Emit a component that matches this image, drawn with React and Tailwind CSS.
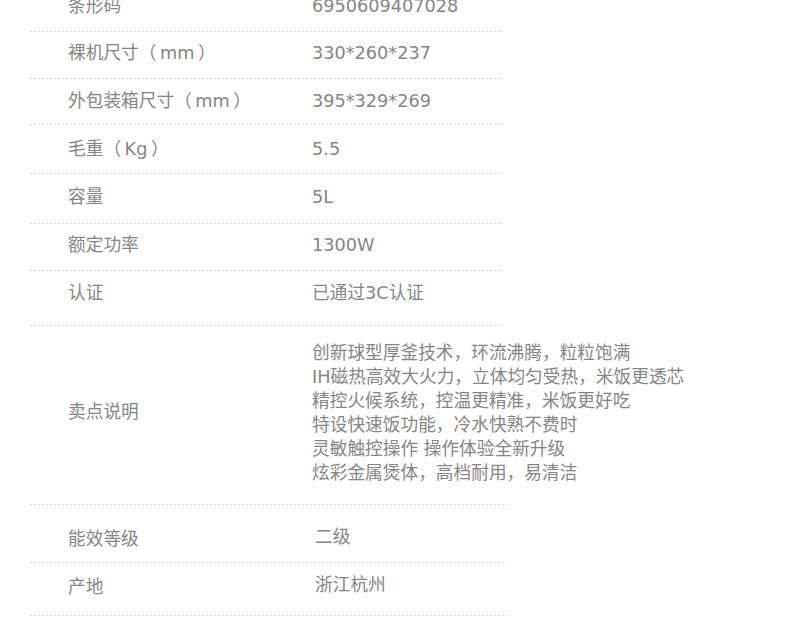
import React from 'react';

const rows = [
  { label: '条形码', value: ['6950609407028'], h: 'h-[47px]', lp: 'pt-[10px]', vp: 'pt-[10px]', w: 'w-[473px]', vx: 'pl-0' },
  { label: '裸机尺寸（\u2009mm\u2009）', value: ['330*260*237'], h: 'h-[46px]', lp: 'pt-[9px]', vp: 'pt-[9px]', w: 'w-[473px]', vx: 'pl-0' },
  { label: '外包装箱尺寸（\u2009mm\u2009）', value: ['395*329*269'], h: 'h-[45px]', lp: 'pt-[10px]', vp: 'pt-[10px]', w: 'w-[473px]', vx: 'pl-0' },
  { label: '毛重（\u2009Kg\u2009）', value: ['5.5'], h: 'h-[48px]', lp: 'pt-[12px]', vp: 'pt-[12px]', w: 'w-[473px]', vx: 'pl-0' },
  { label: '容量', value: ['5L'], h: 'h-[49px]', lp: 'pt-[11px]', vp: 'pt-[11px]', w: 'w-[473px]', vx: 'pl-0' },
  { label: '额定功率', value: ['1300W'], h: 'h-[46px]', lp: 'pt-[9px]', vp: 'pt-[9px]', w: 'w-[473px]', vx: 'pl-0' },
  { label: '认证', value: ['已通过3C认证'], h: 'h-[54px]', lp: 'pt-[10px]', vp: 'pt-[10px]', w: 'w-[473px]', vx: 'pl-0' },
  {
    label: '卖点说明',
    value: [
      '创新球型厚釜技术，环流沸腾，粒粒饱满',
      'IH磁热高效大火力，立体均匀受热，米饭更透芯',
      '精控火候系统，控温更精准，米饭更好吃',
      '特设快速饭功能，冷水快熟不费时',
      '灵敏触控操作 操作体验全新升级',
      '炫彩金属煲体，高档耐用，易清洁',
    ],
    h: 'h-[178px]', lp: 'pt-[74px]', vp: 'pt-[15px]', w: 'w-[477px]', vx: 'pl-0',
  },
  { label: '能效等级', value: ['二级'], h: 'h-[57px]', lp: 'pt-[22px]', vp: 'pt-[20px]', w: 'w-[477px]', vx: 'pl-[3px]' },
  { label: '产地', value: ['浙江杭州'], h: 'h-[52px]', lp: 'pt-[12px]', vp: 'pt-[10px]', w: 'w-[477px]', vx: 'pl-[3px]' },
];

const SpecRow = ({ row }) => (
  <div className={row.w}>
    <div className={`flex items-start ${row.h}`}>
      <div className={`w-[282px] shrink-0 pl-[38px] ${row.lp}`}>{row.label}</div>
      <div className={`whitespace-nowrap ${row.vp} ${row.vx}`}>
        {row.value.map((line) => (
          <div key={line}>{line}</div>
        ))}
      </div>
    </div>
    {/* dotted divider */}
    <div className="h-px bg-[linear-gradient(to_right,#d2d2d2_50%,transparent_50%)] bg-[length:4px_1px] bg-repeat-x" />
  </div>
);

export default function App() {
  return (
    <div className="h-[626px] w-[800px] overflow-hidden bg-white">
      <div
        className="-mt-[16px] pl-[30px] text-[17.7px] leading-[24px] text-[#868686]"
        style={{ fontFamily: '"DejaVu Sans", "Noto Sans CJK SC", sans-serif' }}
      >
        {rows.map((row) => (
          <SpecRow key={row.label} row={row} />
        ))}
      </div>
    </div>
  );
}
